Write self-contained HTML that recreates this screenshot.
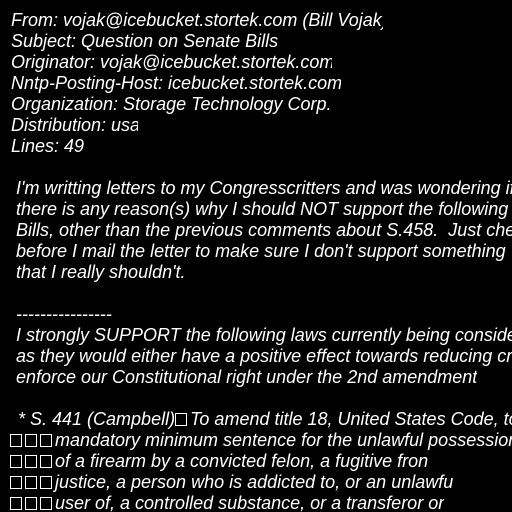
<!DOCTYPE html>
<html><head><style>
html,body{margin:0;padding:0;background:#000;width:512px;height:512px;overflow:hidden}
body{font-family:"Liberation Sans",Arial,sans-serif;font-style:italic;font-size:18px;color:#fff;position:relative}
.l{position:absolute;white-space:pre;line-height:21px;height:21px;overflow:hidden;max-width:496px}
.b{display:inline-block;width:12px;height:13px;border:1px solid #fff;margin-right:3px;vertical-align:-1px;box-sizing:border-box}
</style></head><body>
<div class="l" style="left:11px;top:10px;width:372px">From: vojak@icebucket.stortek.com (Bill Vojak)</div>
<div class="l" style="left:11px;top:31px;width:267px">Subject: Question on Senate Bills</div>
<div class="l" style="left:11px;top:52px;width:321px">Originator: vojak@icebucket.stortek.com</div>
<div class="l" style="left:11px;top:73px;width:330px">Nntp-Posting-Host: icebucket.stortek.com</div>
<div class="l" style="left:11px;top:94px;width:325px">Organization: Storage Technology Corp.</div>
<div class="l" style="left:11px;top:115px;width:127px">Distribution: usa</div>
<div class="l" style="left:11px;top:136px;width:80px">Lines: 49</div>

<div class="l" style="left:16px;top:178px">I'm writting letters to my Congresscritters and was wondering if</div>
<div class="l" style="left:16px;top:199px">there is any reason(s) why I should NOT support the following</div>
<div class="l" style="left:16px;top:220px">Bills, other than the previous comments about S.458.  Just checking</div>
<div class="l" style="left:16px;top:241px">before I mail the letter to make sure I don't support something</div>
<div class="l" style="left:16px;top:262px;width:170px">that I really shouldn't.</div>

<div class="l" style="left:16px;top:304px;width:103px">----------------</div>
<div class="l" style="left:16px;top:325px">I strongly SUPPORT the following laws currently being considered</div>
<div class="l" style="left:16px;top:346px">as they would either have a positive effect towards reducing crime</div>
<div class="l" style="left:16px;top:367px">enforce our Constitutional right under the 2nd amendment</div>

<div class="l" style="left:13px;top:409px;max-width:499px"> * S. 441 (Campbell)<span class="b"></span>To amend title 18, United States Code, to</div>
<div class="l" style="left:10px;top:430px;max-width:502px"><span class="b"></span><span class="b"></span><span class="b"></span>mandatory minimum sentence for the unlawful possession</div>
<div class="l" style="left:10px;top:451px"><span class="b"></span><span class="b"></span><span class="b"></span>of a firearm by a convicted felon, a fugitive fron</div>
<div class="l" style="left:10px;top:472px"><span class="b"></span><span class="b"></span><span class="b"></span>justice, a person who is addicted to, or an unlawfu</div>
<div class="l" style="left:10px;top:493px"><span class="b"></span><span class="b"></span><span class="b"></span>user of, a controlled substance, or a transferor or</div>
</body></html>
